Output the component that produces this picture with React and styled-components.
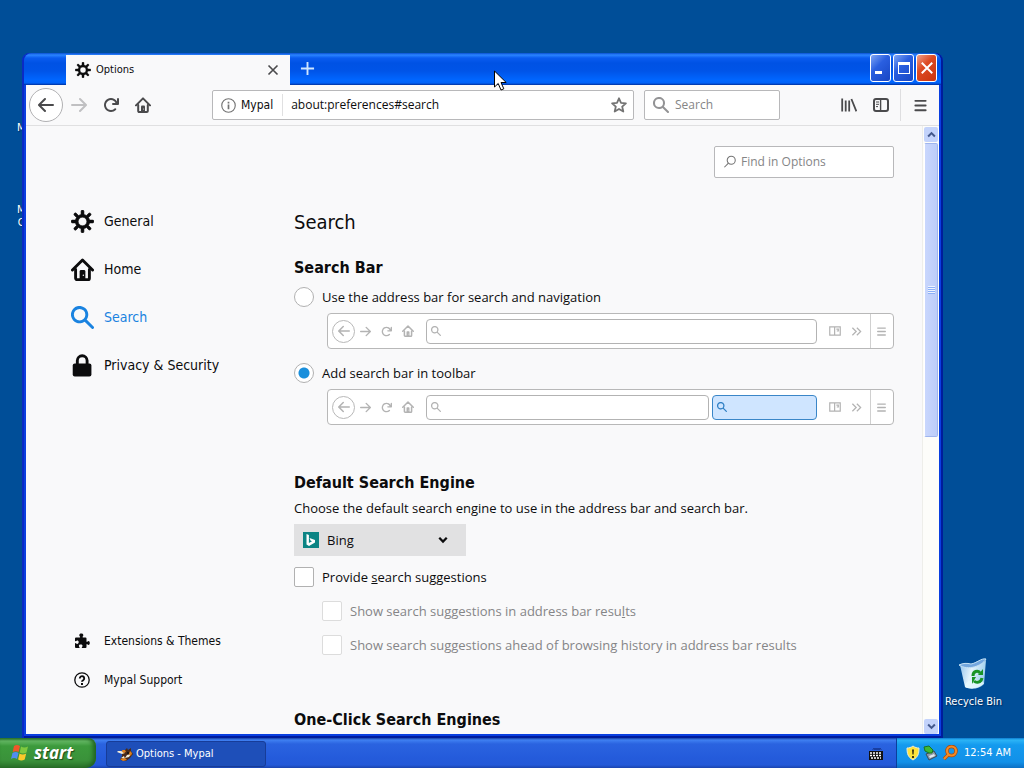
import React, { useState } from "react";
import styled, { createGlobalStyle } from "styled-components";

const GlobalStyle = createGlobalStyle`
  * {
    box-sizing: border-box;
  }
  body {
    margin: 0;
    background: #004e98;
    color: #0c0c0d;
    font-family: "DejaVu Sans Condensed", Tahoma, "DejaVu Sans", sans-serif;
    font-size: 14px;
    line-height: 22px;
  }
  button, input, select {
    font: inherit;
    color: inherit;
    margin: 0;
    padding: 0;
    border: 0;
    background: none;
  }
  h1, h2, p {
    margin: 0;
  }
`;

/* ---------- icons ---------- */

const Svg = ({ size = 16, children, ...rest }) => (
  <svg width={size} height={size} viewBox="0 0 16 16" fill="currentColor" aria-hidden="true" {...rest}>
    {children}
  </svg>
);

const BackIcon = (props) => (
  <Svg {...props}>
    <path d="M15 7H3.414l4.293-4.293a1 1 0 0 0-1.414-1.414l-6 6a1 1 0 0 0 0 1.414l6 6a1 1 0 0 0 1.414-1.414L3.414 9H15a1 1 0 0 0 0-2z" />
  </Svg>
);

const ForwardIcon = (props) => (
  <Svg {...props}>
    <path d="M1 7h11.586L8.293 2.707a1 1 0 0 1 1.414-1.414l6 6a1 1 0 0 1 0 1.414l-6 6a1 1 0 0 1-1.414-1.414L12.586 9H1a1 1 0 0 1 0-2z" />
  </Svg>
);

const ReloadIcon = (props) => (
  <Svg {...props}>
    <path d="M15 1a1 1 0 0 0-1 1v2.418A6.995 6.995 0 1 0 8 15a6.954 6.954 0 0 0 4.95-2.05 1 1 0 0 0-1.414-1.414A5.019 5.019 0 1 1 12.549 6H10a1 1 0 0 0 0 2h5a1 1 0 0 0 1-1V2a1 1 0 0 0-1-1z" />
  </Svg>
);

const HomeIcon = (props) => (
  <Svg {...props}>
    <g fill="none" stroke="currentColor" strokeWidth="2" strokeLinecap="round" strokeLinejoin="round">
      <path d="M1 8.4 8 1.4l7 7" />
      <path d="M3.2 8v6a1 1 0 0 0 1 1h7.6a1 1 0 0 0 1-1V8" />
    </g>
    <path d="M6 15V9.4a1 1 0 0 1 1-1h2a1 1 0 0 1 1 1V15z" />
    <circle cx="8.6" cy="12" r="0.5" fill="#f9f9fa" />
  </Svg>
);

const GearIcon = (props) => (
  <Svg {...props}>
    <path d="M15 7h-2.1a4.967 4.967 0 0 0-.732-1.753l1.49-1.49a1 1 0 0 0-1.414-1.414l-1.49 1.49A4.968 4.968 0 0 0 9 3.1V1a1 1 0 0 0-2 0v2.1a4.968 4.968 0 0 0-1.753.732l-1.49-1.49a1 1 0 0 0-1.414 1.415l1.49 1.49A4.967 4.967 0 0 0 3.1 7H1a1 1 0 0 0 0 2h2.1a4.968 4.968 0 0 0 .737 1.763c-.014.013-.032.017-.045.03l-1.45 1.45a1 1 0 1 0 1.414 1.414l1.45-1.45c.013-.013.018-.031.03-.045A4.968 4.968 0 0 0 7 12.9V15a1 1 0 0 0 2 0v-2.1a4.968 4.968 0 0 0 1.753-.732l1.49 1.49a1 1 0 0 0 1.414-1.414l-1.49-1.49A4.967 4.967 0 0 0 12.9 9H15a1 1 0 0 0 0-2zM5 8a3 3 0 1 1 3 3 3 3 0 0 1-3-3z" stroke="currentColor" strokeWidth="0.4" />
  </Svg>
);

const SearchIcon = (props) => (
  <Svg {...props}>
    <path d="M15.707 14.293l-4.822-4.822a6.019 6.019 0 1 0-1.414 1.414l4.822 4.822a1 1 0 0 0 1.414-1.414zM6 10a4 4 0 1 1 4-4 4 4 0 0 1-4 4z" />
  </Svg>
);

const ThinSearchIcon = (props) => (
  <Svg {...props} fill="none" stroke="currentColor" strokeWidth="1.2">
    <circle cx="9.4" cy="6" r="4.6" />
    <path d="M6.2 9.4 1.6 14" />
  </Svg>
);

const LockIcon = (props) => (
  <Svg {...props}>
    <path d="M4.4 7V4.6a3.4 3.4 0 0 1 6.8 0V7" fill="none" stroke="currentColor" strokeWidth="2" />
    <rect x="1.2" y="6.6" width="13" height="9" rx="1.4" />
  </Svg>
);

const PuzzleIcon = (props) => (
  <Svg {...props}>
    <path d="M14.5 8c-.97 0-1 1-1.5 1-.3 0-.5-.2-.5-.5v-3a1 1 0 0 0-1-1H9c-.3 0-.5-.2-.5-.5 0-.5.8-.7.8-1.8 0-1-.7-1.7-2-1.7s-2 .7-2 1.7c0 1.100.9 1.300.9 1.800 0 .3-.2.5-.5.5H2a1 1 0 0 0-1 1v2.200c0 .3.2.5.5.5.6 0 .7-.8 1.700-.8.9 0 1.500.6 1.500 1.700s-.6 1.800-1.500 1.800c-1 0-1.100-.8-1.700-.8-.3 0-.5.2-.5.5V14a1 1 0 0 0 1 1h3.200c.3 0 .5-.2.5-.5 0-.6-.8-.7-.8-1.600 0-.8.7-1.300 1.800-1.300s1.800.5 1.800 1.300c0 .9-.8 1-.8 1.600 0 .3.2.5.5.5h3.300a1 1 0 0 0 1-1v-2.500c0-.3.2-.5.5-.5.5 0 .6 1 1.500 1 .7 0 1.300-.7 1.300-2S15.200 8 14.500 8z" />
  </Svg>
);

const HelpIcon = (props) => (
  <Svg {...props} fill="none" stroke="currentColor">
    <circle cx="8" cy="8" r="7.2" strokeWidth="1.3" />
    <path d="M5.8 6.4a2.200 2.200 0 1 1 3.400 1.800c-.8.5-1.200.8-1.200 1.600" strokeWidth="1.9" />
    <path d="M8 11v1.9" strokeWidth="2" />
  </Svg>
);

const InfoIcon = (props) => (
  <Svg {...props} fill="none" stroke="currentColor">
    <circle cx="8" cy="8" r="7.2" strokeWidth="1.2" />
    <path d="M8 7v5M8 4v1.8" strokeWidth="1.8" />
  </Svg>
);

const StarIcon = (props) => (
  <Svg {...props} fill="none" stroke="currentColor" strokeWidth="1.8" strokeLinejoin="round">
    <path d="M8 1.3l2 4.500 4.900.5-3.700 3.300 1.100 4.900L8 12l-4.300 2.500 1.100-4.900L1.100 6.300 6 5.800z" />
  </Svg>
);

const LibraryIcon = (props) => (
  <Svg {...props} fill="none" stroke="currentColor" strokeWidth="1.8">
    <path d="M1.200 1.500v13M4.700 3.500v11M8.200 3.500v11M10.400 2l5 12.300" />
  </Svg>
);

const SidebarIcon = (props) => (
  <Svg {...props} fill="none" stroke="currentColor">
    <rect x="1" y="2" width="14" height="12" rx="2" strokeWidth="2" />
    <path d="M7.600 2v12" strokeWidth="1.4" />
    <path d="M3 5h3M3 7.300h3M3 9.600h2" />
  </Svg>
);

const MenuIcon = (props) => (
  <Svg {...props} fill="none" stroke="currentColor" strokeWidth="2" strokeLinecap="round">
    <path d="M2.500 3h11M2.500 8h11M2.500 13h11" />
  </Svg>
);

const PanelIcon = (props) => (
  <Svg {...props} fill="none" stroke="currentColor" strokeWidth="1.6">
    <path d="M1 2.500h14v11H1zM7.500 2.500v11M9.800 5.500h2.600v2.500h-2" />
  </Svg>
);

const ChevronsIcon = (props) => (
  <Svg {...props} fill="none" stroke="currentColor" strokeWidth="1.8">
    <path d="M2 2.500 7.500 8 2 13.500M8.500 2.500 14 8l-5.500 5.500" />
  </Svg>
);

const CloseIcon = (props) => (
  <Svg {...props} fill="none" stroke="currentColor" strokeWidth="2.2">
    <path d="M2 2l12 12M14 2 2 14" />
  </Svg>
);

const PlusIcon = (props) => (
  <Svg {...props} fill="none" stroke="currentColor" strokeWidth="2">
    <path d="M8 1v14M1 8h14" />
  </Svg>
);

const ChevronIcon = ({ up, ...props }) => (
  <Svg {...props} fill="none" stroke="currentColor" strokeWidth="3.6">
    <path d={up ? "M2 11.500 8 5.500l6 6" : "M2 4.500l6 6 6-6"} />
  </Svg>
);

const BingIcon = () => (
  <Svg>
    <path fill="#0c8484" d="M0 0h16v16H0z" />
    <path fill="#fff" d="M3.500 2l2.400.9v8l3.100-1.700-1.500-.7-1-2.400 5.500 2v2.500l-6 3.400-2.500-1.400z" />
  </Svg>
);

const RecycleBinIcon = () => (
  <svg width="30" height="32" viewBox="0 0 30 32" aria-hidden="true">
    <defs>
      <linearGradient id="bin" x1="0" x2="1" y2="0.3">
        <stop offset="0" stopColor="#8fc1ec" />
        <stop offset="0.5" stopColor="#e4f4fc" />
        <stop offset="1" stopColor="#9fd0ee" />
      </linearGradient>
    </defs>
    <path d="M2 7c7 4 18 2 26-5l-2 24c-4 5-14 6-19 3z" fill="url(#bin)" />
    <path d="M1 7c4-2 8-2 12-1 6-1 10-6 15-5-4 7-18 12-27 6z" fill="#73a7de" stroke="#c6e3f6" />
    <path d="M7 26c4-5 13-6 19-1-4 5-13 7-19 4z" fill="#e7faff" opacity="0.8" />
    <g fill="none" stroke="#189426" strokeWidth="3">
      <path d="M15 18c0-5 5-6 7-3M24 20c-1 5-6 5-8 3" />
    </g>
    <path d="M20 17h5v-6zM18 19h-4v7z" fill="#189426" />
  </svg>
);

const WindowsLogo = () => (
  <svg width="19" height="18" viewBox="0 0 19 18" aria-hidden="true">
    <path fill="#f0562a" d="M3 2c2-1.500 4-1.300 6 0L7.600 8C6 6.900 4 6.800 1.700 8z" />
    <path fill="#7fc93f" d="M10 2.500c2 1.300 4.500 1.400 7 0l-1.500 6c-2.500 1.300-4.800 1.200-6.800 0z" />
    <path fill="#4f8df0" d="M1.500 9c2.200-1.200 4.200-1.200 6 0L6 15c-2-1.200-4-1.200-6 0z" />
    <path fill="#fbc92b" d="M8.500 9.500c2 1.200 4.300 1.300 6.700 0l-1.500 6c-2.300 1.400-4.600 1.300-6.600 0z" />
  </svg>
);

const MypalLogo = () => (
  <svg width="16" height="16" viewBox="0 0 16 16" aria-hidden="true">
    <path fill="#4a2a1a" d="M5 5l3-1 2-2 1 2 3-2v3l2 3-3 4-4 3-6-1 2-4z" />
    <path fill="#f4ecd8" d="M1 5c3 0 5 0 7 2L5 8 0 6zM10 9l4-1-2 3-4 1zM4 12l3-2 1 3z" />
    <path fill="#e0801c" d="M5 4h3l1 2-3 1zM13 5l2 2-1 3-2-2zM3 13l5-1 2 2-4 1z" />
    <circle cx="11" cy="7" r="1" fill="#111" />
  </svg>
);

const KeyboardIcon = () => (
  <svg width="14" height="14" viewBox="0 0 14 14" aria-hidden="true">
    <path d="M4 3.500l1-1 1 1 1-1 1 1 1-1 1 1 1-1 1 1" fill="none" stroke="#06134e" />
    <path d="M0 5h14v9H0z" fill="#111" />
    <path d="M1 7h12M1 9.500h12M2 12h10" stroke="#fff" strokeWidth="1.6" strokeDasharray="2 1" />
  </svg>
);

const ShieldIcon = () => (
  <svg width="14" height="16" viewBox="0 0 14 16" aria-hidden="true">
    <path d="M7 1c2 1.500 4 2 6 2 0 6-1 9-6 12-5-3-6-6-6-12 2 0 4-.5 6-2z" fill="#ffe23a" stroke="#e9e9d8" />
    <path d="M6 4.500h2l-.4 5H6.400zM6 11h2v2H6z" fill="#3c3410" />
  </svg>
);

const DeviceIcon = () => (
  <svg width="16" height="16" viewBox="0 0 16 16" aria-hidden="true">
    <path d="M3 9l8-3 3 5-8 4z" fill="#8d9aa8" stroke="#394a5c" />
    <path d="M6 11l5-2 1 2-5 2z" fill="#e4e9ee" />
    <path d="M1 2l5-1 4 4-1 3H6L2 6z" fill="#3fba32" stroke="#1a7420" />
  </svg>
);

const KeyIcon = () => (
  <svg width="16" height="16" viewBox="0 0 16 16" aria-hidden="true">
    <circle cx="9.500" cy="6" r="4.500" fill="none" stroke="#a84c10" strokeWidth="3.6" />
    <path d="M6.500 9.500 2 14" stroke="#a84c10" strokeWidth="3.6" />
    <circle cx="9.500" cy="6" r="4.500" fill="none" stroke="#f48a24" strokeWidth="2.2" />
    <path d="M6.500 9.500 2 14" stroke="#f48a24" strokeWidth="2.2" />
  </svg>
);

/* ---------- desktop ---------- */

const Screen = styled.div`
  display: flex;
  flex-direction: column;
  height: 100vh;
  overflow: hidden;
`;

const Desktop = styled.div`
  position: relative;
  flex: 1;
  min-height: 0;
`;

const DesktopIcon = styled.div`
  position: absolute;
  top: ${(p) => p.$top};
  left: ${(p) => p.$left || "auto"};
  right: ${(p) => p.$right || "auto"};
  display: flex;
  flex-direction: column;
  align-items: center;
  gap: 5px;
  color: #fff;
  font-size: 11px;
  line-height: 13px;
  text-align: center;
  text-shadow: 1px 1px 1px #002a5c;
`;

const Pointer = styled.svg`
  position: absolute;
  left: 494px;
  top: 70px;
`;

/* ---------- browser window ---------- */

const Frame = styled.div`
  position: absolute;
  top: 53px;
  left: 22px;
  right: 81px;
  bottom: 0;
  display: flex;
  flex-direction: column;
  padding: 0 4px 4px;
  border-radius: 8px 8px 0 0;
  background: #0a3fe0;
  box-shadow: inset 2px 0 #0a2bc4, inset -2px 0 #001c9c, inset 0 -2px #001c9c;
`;

const TitleBar = styled.div`
  display: flex;
  align-items: flex-end;
  height: 32px;
  margin: 0 -2px;
  padding: 0 4px 0 42px;
  border-radius: 8px 8px 0 0;
  background: linear-gradient(#0a50d0 0, #2b85ff 2px, #0a5cf0 5px, #0052e4 10px, #0054e8 18px, #0066ff 27px, #0062f8 30px, #002f9c 32px);
`;

const Tab = styled.div`
  display: flex;
  align-items: center;
  gap: 5px;
  width: 224px;
  height: 30px;
  padding: 0 11px 0 9px;
  background: #f9f9fa;
  font-size: 11px;
  line-height: 16px;

  span {
    flex: 1;
  }
`;

const PlainButton = styled.button`
  display: flex;
  align-items: center;
  justify-content: center;
  color: ${(p) => p.$color || "#4a4a4c"};
`;

const NewTab = styled(PlainButton)`
  width: 34px;
  height: 34px;
`;

const WindowButtons = styled.div`
  display: flex;
  gap: 2px;
  margin-left: auto;
  align-self: flex-start;
  padding-top: 1px;
`;

const WindowButton = styled.button`
  display: flex;
  align-items: center;
  justify-content: center;
  width: 21px;
  height: 28px;
  border: 1px solid #fff;
  border-radius: 3px;
  color: #fff;
  background: ${(p) =>
    p.$close
      ? "linear-gradient(135deg, #f0a08a, #dd4a22 40%, #c9340f)"
      : "linear-gradient(135deg, #7fa6f5, #2a5fe0 40%, #1746c4)"};
`;

const Toolbar = styled.div`
  display: flex;
  align-items: center;
  height: 41px;
  padding: 0 0 0 3px;
  background: #f9f9fa;
  border-bottom: 1px solid #e0e0e1;
`;

const ToolButton = styled(PlainButton)`
  width: 32px;
  height: 32px;
`;

const BackButton = styled(PlainButton)`
  width: 34px;
  height: 34px;
  border: 1px solid #b1b1b3;
  border-radius: 50%;
  background: #fff;
`;

const Spacer = styled.div`
  width: ${(p) => p.$width || "53px"};
`;

const Field = styled.div`
  display: flex;
  align-items: center;
  gap: ${(p) => p.$gap || "6px"};
  height: ${(p) => p.$height || "30px"};
  padding: 0 6px 0 8px;
  border: 1px solid #b8b8ba;
  border-radius: 2px;
  background: #fff;
  font-size: 12px;
  ${(p) => (p.$width ? `width: ${p.$width};` : "flex: 1;")}

  svg {
    flex: none;
    color: ${(p) => p.$icon || "#737373"};
  }
  input {
    flex: 1;
    min-width: 0;
    outline: 0;
    font-family: "Open Sans", "Noto Sans", sans-serif;
  }
  input::placeholder {
    color: #858586;
    opacity: 1;
  }
`;

const Identity = styled.span`
  padding-right: 9px;
  margin-right: 3px;
  border-right: 1px solid #e0e0e1;
`;

const MenuButton = styled(ToolButton)`
  width: 39px;
  margin-left: 3px;
  border-left: 1px solid #dedee0;
`;

const Content = styled.div`
  display: flex;
  flex: 1;
  min-height: 0;
  background: #f9f9fa;
`;

const Scrollbar = styled.div`
  display: flex;
  flex-direction: column;
  width: 17px;
  padding: 1px 1px 0;
  border-left: 1px solid #eeeeea;
  background: #fdfdfa;
`;

const ScrollButton = styled(PlainButton)`
  height: 15px;
  border-radius: 2px;
  background: #c3d3fb;
`;

const Thumb = styled.div`
  display: flex;
  flex-direction: column;
  align-items: center;
  justify-content: center;
  height: 294px;
  margin-top: 1px;
  margin-bottom: auto;
  border: 1px solid #9fb5ee;
  border-left-color: #fff;
  border-radius: 2px;
  background: linear-gradient(90deg, #c9d7fd, #bccdf9);
`;

const Grip = styled.div`
  width: 7px;
  height: 8px;
  background: repeating-linear-gradient(#eef4fe 0 1px, #8cb0f8 1px 2px);
`;

/* ---------- preferences ---------- */

const Sidebar = styled.nav`
  display: flex;
  flex-direction: column;
  width: 268px;
  padding: 71px 0 35px 45px;
`;

const NavLink = styled.a`
  display: flex;
  align-items: center;
  gap: ${(p) => (p.$small ? "14px" : "10px")};
  height: ${(p) => (p.$small ? "39px" : "48px")};
  padding-left: ${(p) => (p.$small ? "3px" : "0")};
  color: ${(p) => (p.$active ? "#1a83e0" : "#0c0c0d")};
  font-size: ${(p) => (p.$small ? "12px" : "14px")};
  text-decoration: none;
`;

const NavGap = styled.div`
  flex: 1;
`;

const Main = styled.main`
  flex: 1;
  min-width: 0;
  padding: 20px 28px 0 0;
  overflow: hidden;
`;

const FindRow = styled.div`
  display: flex;
  justify-content: flex-end;
`;

const Title = styled.h1`
  margin-top: 30px;
  font-size: 20px;
  font-weight: 400;
  line-height: 28px;
`;

const Heading = styled.h2`
  margin-top: ${(p) => p.$top};
  font-size: 16px;
  line-height: 24px;
`;

const bodyText = `
  font-family: "Open Sans", "Noto Sans", sans-serif;
  font-size: 13px;
  line-height: 22px;
`;

const Description = styled.p`
  ${bodyText}
  padding-top: 2px;
`;

const Option = styled.label`
  ${bodyText}
  display: flex;
  align-items: center;
  gap: 8px;
  margin-top: ${(p) => p.$top};
  margin-left: ${(p) => (p.$indent ? "28px" : "0")};
  color: ${(p) => (p.$disabled ? "#858587" : "inherit")};
`;

const Radio = styled.input`
  appearance: none;
  width: 20px;
  height: 20px;
  border: 1px solid #b1b1b1;
  border-radius: 50%;
  background: #fff;

  &:checked {
    background: radial-gradient(circle, #1a8fdc 5px, #fff 6px);
  }
`;

const Checkbox = styled.input`
  appearance: none;
  width: 20px;
  height: 20px;
  border: 1px solid #b1b1b1;
  border-radius: 2px;
  background: #fff;

  &:checked {
    background: #1a8fdc;
  }
  &:disabled {
    border-color: #dcdcdc;
  }
`;

const Preview = styled.div`
  display: flex;
  align-items: center;
  height: 36px;
  margin: 5px 0 0 33px;
  padding: 0 2px 0 4px;
  border: 1px solid #b8b8b8;
  border-radius: 4px;
  background: #fff;
  color: #b3b3b3;
`;

const PreviewCircle = styled.span`
  display: flex;
  align-items: center;
  justify-content: center;
  width: 23px;
  height: 23px;
  border: 1px solid #b8b8b8;
  border-radius: 50%;
`;

const PreviewItem = styled.span`
  display: flex;
  align-items: center;
  justify-content: center;
  width: 21px;
`;

const PreviewField = styled.span`
  display: flex;
  align-items: center;
  height: 25px;
  margin-left: ${(p) => (p.$blue ? "3px" : "8px")};
  padding-left: 4px;
  border: 1px solid ${(p) => (p.$blue ? "#3a86c8" : "#b3b3b3")};
  border-radius: 4px;
  color: ${(p) => (p.$blue ? "#2f7fc4" : "#b3b3b3")};
  background: ${(p) => (p.$blue ? "#cfe5ff" : "#fff")};
  ${(p) => (p.$blue ? "width: 105px;" : "flex: 1;")}
`;

const PreviewEnd = styled.span`
  display: flex;
  align-items: center;
  gap: 1px;
  height: 34px;
  margin-left: 7px;
`;

const PreviewMenu = styled(PreviewItem)`
  height: 34px;
  margin-left: 2px;
  border-left: 1px solid #d0d0d0;
`;

const SelectBox = styled.div`
  ${bodyText}
  display: flex;
  align-items: center;
  width: 172px;
  height: 32px;
  margin-top: 5px;
  padding: 0 18px 0 9px;
  background: #e1e1e2;

  svg {
    flex: none;
    pointer-events: none;
  }
  select {
    flex: 1;
    appearance: none;
    padding-left: 8px;
    outline: 0;
  }
`;

/* ---------- taskbar ---------- */

const Taskbar = styled.div`
  display: flex;
  height: 30px;
  background: linear-gradient(#1941a5 0, #3f80f2 2px, #2a63e0 6px, #245bdb 20px, #2359d8 27px, #1a44ae);
  color: #fff;
  font-size: 11px;
`;

const StartButton = styled.button`
  display: flex;
  align-items: center;
  gap: 4px;
  width: 96px;
  padding-left: 11px;
  border-radius: 0 8px 10px 0;
  background: linear-gradient(#2f7a2f 0, #64b864 3px, #3c9a3c 8px, #3a923a 22px, #2a722a);
  box-shadow: inset -3px 0 4px #216321;
  color: #fff;
  font-family: "Open Sans", "Noto Sans", sans-serif;
  font-size: 17px;
  font-style: italic;
  font-weight: 700;
  line-height: 24px;
  text-shadow: 1px 1px 1px #1b4a1b;
`;

const TaskButton = styled.button`
  display: flex;
  align-items: center;
  gap: 3px;
  width: 160px;
  height: 26px;
  margin: 3px 0 0 10px;
  padding-left: 10px;
  border: 1px solid #173c98;
  border-radius: 3px;
  background: #1e4fb9;
  color: #fff;
`;

const LanguageBar = styled.div`
  display: flex;
  align-items: center;
  margin-left: auto;
  padding-right: 13px;
`;

const Tray = styled.div`
  display: flex;
  align-items: center;
  gap: 3px;
  width: 128px;
  padding-left: 9px;
  border-left: 1px solid #0b3f9c;
  background: linear-gradient(#0d7bd0 0, #2cb4f6 2px, #149aee 7px, #1290e8 24px, #0c6fc4);

  time {
    margin-left: 3px;
  }
`;

const PreviewBar = ({ withSearch }) => (
  <Preview aria-hidden="true">
    <PreviewCircle>
      <BackIcon size={12} />
    </PreviewCircle>
    <PreviewItem>
      <ForwardIcon size={11} />
    </PreviewItem>
    <PreviewItem>
      <ReloadIcon size={11} />
    </PreviewItem>
    <PreviewItem>
      <HomeIcon size={12} />
    </PreviewItem>
    <PreviewField>
      <SearchIcon size={10} />
    </PreviewField>
    {withSearch && (
      <PreviewField $blue>
        <SearchIcon size={10} />
      </PreviewField>
    )}
    <PreviewEnd>
      <PreviewItem>
        <PanelIcon size={12} />
      </PreviewItem>
      <PreviewItem>
        <ChevronsIcon size={11} />
      </PreviewItem>
      <PreviewMenu>
        <MenuIcon size={11} />
      </PreviewMenu>
    </PreviewEnd>
  </Preview>
);

const Preferences = () => {
  const [bar, setBar] = useState("toolbar");
  const [suggest, setSuggest] = useState(false);

  return (
    <Main>
      <FindRow>
        <Field $width="180px" $height="32px" $gap="4px">
          <ThinSearchIcon size={14} />
          <input type="search" placeholder="Find in Options" aria-label="Find in Options" />
        </Field>
      </FindRow>

      <Title>Search</Title>

      <Heading $top="20px">Search Bar</Heading>
      <Option $top="6px">
        <Radio type="radio" name="bar" checked={bar === "address"} onChange={() => setBar("address")} />
        Use the address bar for search and navigation
      </Option>
      <PreviewBar />
      <Option $top="13px">
        <Radio type="radio" name="bar" checked={bar === "toolbar"} onChange={() => setBar("toolbar")} />
        Add search bar in toolbar
      </Option>
      <PreviewBar withSearch />

      <Heading $top="46px">Default Search Engine</Heading>
      <Description>
        <label htmlFor="engine">
          Choose the default search engine to use in the address bar and search bar.
        </label>
      </Description>
      <SelectBox>
        <BingIcon />
        <select id="engine" defaultValue="Bing">
          <option>Bing</option>
        </select>
        <ChevronIcon size={10} />
      </SelectBox>
      <Option $top="10px">
        <Checkbox type="checkbox" checked={suggest} onChange={() => setSuggest(!suggest)} />
        <span>
          Provide <u>s</u>earch suggestions
        </span>
      </Option>
      <Option $top="12px" $indent $disabled={!suggest}>
        <Checkbox type="checkbox" disabled={!suggest} />
        <span>
          Show search suggestions in address bar resu<u>l</u>ts
        </span>
      </Option>
      <Option $top="12px" $indent $disabled={!suggest}>
        <Checkbox type="checkbox" disabled={!suggest} />
        Show search suggestions ahead of browsing history in address bar results
      </Option>

      <Heading $top="52px">One-Click Search Engines</Heading>
    </Main>
  );
};

const BrowserWindow = () => (
  <Frame>
    <TitleBar>
      <Tab>
        <GearIcon size={16} />
        <span>Options</span>
        <PlainButton aria-label="Close tab">
          <CloseIcon size={12} />
        </PlainButton>
      </Tab>
      <NewTab aria-label="New tab" $color="#cfe6ff">
        <PlusIcon size={15} />
      </NewTab>
      <WindowButtons>
        <WindowButton aria-label="Minimize">
          <Svg>
            <path d="M2 11h7v3H2z" />
          </Svg>
        </WindowButton>
        <WindowButton aria-label="Maximize">
          <Svg>
            <path d="M2 2h12v12H2zm1 3v8h10V5z" fillRule="evenodd" />
          </Svg>
        </WindowButton>
        <WindowButton aria-label="Close" $close>
          <CloseIcon size={14} />
        </WindowButton>
      </WindowButtons>
    </TitleBar>

    <Toolbar>
      <BackButton aria-label="Back">
        <BackIcon />
      </BackButton>
      <ToolButton aria-label="Forward" $color="#c0c0c2">
        <ForwardIcon />
      </ToolButton>
      <ToolButton aria-label="Reload">
        <ReloadIcon />
      </ToolButton>
      <ToolButton aria-label="Home">
        <HomeIcon />
      </ToolButton>
      <Spacer />
      <Field $gap="5px">
        <InfoIcon size={15} />
        <Identity>Mypal</Identity>
        <input type="text" defaultValue="about:preferences#search" aria-label="Address" />
        <PlainButton aria-label="Bookmark this page">
          <StarIcon size={16} />
        </PlainButton>
      </Field>
      <Spacer $width="10px" />
      <Field $width="136px" $icon="#939395">
        <SearchIcon size={16} />
        <input type="search" placeholder="Search" aria-label="Search the web" />
      </Field>
      <Spacer />
      <ToolButton aria-label="Library">
        <LibraryIcon />
      </ToolButton>
      <ToolButton aria-label="Sidebars">
        <SidebarIcon />
      </ToolButton>
      <MenuButton aria-label="Open menu">
        <MenuIcon size={15} />
      </MenuButton>
    </Toolbar>

    <Content>
      <Sidebar>
        <NavLink href="#general">
          <GearIcon size={23} />
          General
        </NavLink>
        <NavLink href="#home">
          <HomeIcon size={23} />
          Home
        </NavLink>
        <NavLink href="#search" $active>
          <SearchIcon size={23} />
          Search
        </NavLink>
        <NavLink href="#privacy">
          <LockIcon size={23} />
          Privacy &amp; Security
        </NavLink>
        <NavGap />
        <NavLink href="#addons" $small>
          <PuzzleIcon size={16} />
          Extensions &amp; Themes
        </NavLink>
        <NavLink href="#support" $small>
          <HelpIcon size={16} />
          Mypal Support
        </NavLink>
      </Sidebar>
      <Preferences />
      <Scrollbar>
        <ScrollButton aria-label="Scroll up" $color="#44598c">
          <ChevronIcon up size={9} />
        </ScrollButton>
        <Thumb>
          <Grip />
        </Thumb>
        <ScrollButton aria-label="Scroll down" $color="#44598c">
          <ChevronIcon size={9} />
        </ScrollButton>
      </Scrollbar>
    </Content>
  </Frame>
);

const App = () => (
  <>
    <GlobalStyle />
    <Screen>
      <Desktop>
        <DesktopIcon $left="17px" $top="121px">
          M
        </DesktopIcon>
        <DesktopIcon $left="17px" $top="203px">
          <span>
            M<br />C
          </span>
        </DesktopIcon>
        <DesktopIcon $right="22px" $top="658px">
          <RecycleBinIcon />
          Recycle Bin
        </DesktopIcon>
        <BrowserWindow />
        <Pointer width="14" height="22" viewBox="0 0 14 22" aria-hidden="true">
          <path d="M.5 1v16l3.700-3.500 2.800 6.500 2.800-1.200L7 12.500h5.200z" fill="#fff" stroke="#000" />
        </Pointer>
      </Desktop>
      <Taskbar>
        <StartButton>
          <WindowsLogo />
          start
        </StartButton>
        <TaskButton>
          <MypalLogo />
          Options - Mypal
        </TaskButton>
        <LanguageBar>
          <KeyboardIcon />
        </LanguageBar>
        <Tray>
          <ShieldIcon />
          <DeviceIcon />
          <KeyIcon />
          <time>12:54 AM</time>
        </Tray>
      </Taskbar>
    </Screen>
  </>
);

export default App;
